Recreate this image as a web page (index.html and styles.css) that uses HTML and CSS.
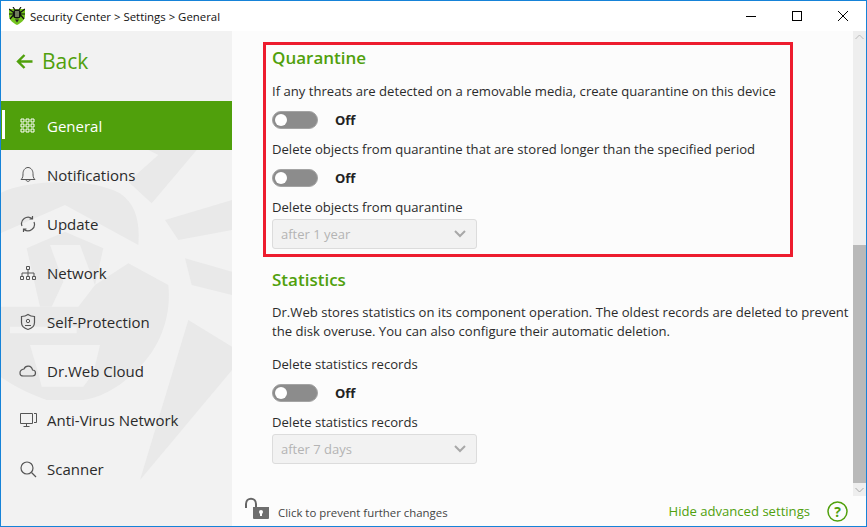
FILE: index.html
```html
<!DOCTYPE html>
<html lang="en">
<head>
    <meta charset="UTF-8">
    <title>Security Center > Settings > General</title>
    <link rel="stylesheet" href="styles.css">
</head>
<body>
<div class="window">
    <div class="titlebar">
        <svg class="logo" width="16" height="18" viewBox="0 0 16 18">
            <path d="M0 2h16v7c0 4-4 7-8 9-4-2-8-5-8-9z" fill="#74c41f"/>
            <path d="M0 2l4 3M16 2l-4 3M0 7h3.500M16 7h-3.500M1 12l3-3.500M15 12l-3-3.500M4 0l2 3M12 0l-2 3" stroke="#111" stroke-width="1.200"/>
            <ellipse cx="8" cy="7" rx="4.500" ry="4.500" fill="#111"/>
            <path d="M6.500 4h3v6h-3z" fill="#cfe9a8"/>
            <path d="M8 4v6" stroke="#111"/>
            <path d="M6 12.500h4l-2 3z" fill="#222"/>
        </svg>
        <span class="title">Security Center &gt; Settings &gt; General</span>
        <div class="controls">
            <svg width="12" height="12" viewBox="0 0 12 12"><path d="M1 6.500h10" stroke="#000"/></svg>
            <svg width="12" height="12" viewBox="0 0 12 12"><rect x="1.500" y="1.500" width="9" height="9" fill="none" stroke="#000"/></svg>
            <svg width="12" height="12" viewBox="0 0 12 12"><path d="M1 1l10 10M11 1L1 11" stroke="#000"/></svg>
        </div>
    </div>
    <div class="body">
        <aside class="sidebar">
            <svg class="watermark" width="232" height="345" viewBox="0 0 696 1035">
                <g fill="#e9e9e9">
                    <path d="M445 0H590L455 160 385 95 475 15Z"/>
                    <path d="M495 210L696 150V240L535 270Z"/>
                    <path d="M555 325L696 365V435L575 405Z"/>
                    <path d="M565 510L696 590V660L420 990Z"/>
                    <path d="M0 130C60 95 260 75 360 130 410 165 420 220 415 285L195 165 0 250Z"/>
                    <path d="M80 295L195 245 310 295 285 405 240 285H150L190 395 155 470H120Z"/>
                    <path d="M385 340L505 405C515 500 480 600 400 670 350 720 290 745 250 750H140C80 730 30 700 0 680V470H235L285 405Z"/>
                </g>
                <g fill="#f2f2f2">
                    <path d="M30 530H230V550H30Z"/>
                    <path d="M90 585H300L280 670 250 710H125L115 670Z"/>
                </g>
            </svg>
            <a class="back">
                <svg width="17" height="17" viewBox="0 0 17 17"><path d="M8.500 2L2 8.500 8.500 15M2.500 8.500H16.500" fill="none" stroke="#50a00c" stroke-width="2.400"/></svg>
                <span>Back</span>
            </a>
            <nav class="nav">
                <a class="nav-item active">
                    <svg width="18" height="18" viewBox="0 0 18 18" fill="none" stroke="#fff"><path d="M2.500 2.500h3v3h-3zM7.500 2.500h3v3h-3zM12.500 2.500h3v3h-3zM2.500 7.500h3v3h-3zM7.500 7.500h3v3h-3zM12.500 7.500h3v3h-3zM2.500 12.500h3v3h-3zM7.500 12.500h3v3h-3zM12.500 12.500h3v3h-3z" transform="translate(-.5 -.5)"/></svg>
                    <span>General</span>
                </a>
                <a class="nav-item">
                    <svg width="18" height="18" viewBox="0 0 18 18" fill="none" stroke="#555"><path d="M2 13.500c2-1.500 2-4 2-6 0-3 2-6 5-6s5 3 5 6c0 2 0 4.500 2 6zM7 13.500c0 2.500 4 2.500 4 0"/></svg>
                    <span>Notifications</span>
                </a>
                <a class="nav-item">
                    <svg width="18" height="18" viewBox="0 0 18 18" fill="none" stroke="#555" stroke-width="1.200"><path d="M3 11A6.500 6.500 0 0 1 13 3.500M15 7a6.500 6.500 0 0 1-10 7.500M13.500 1v3h-3M4.500 17v-3h3"/></svg>
                    <span>Update</span>
                </a>
                <a class="nav-item">
                    <svg width="18" height="18" viewBox="0 0 18 18" fill="none" stroke="#555"><path d="M7.500 2.500h3v3h-3zM1.500 12.500h3v3h-3zM7.500 12.500h3v3h-3zM13.500 12.500h3v3h-3zM9 5.500v7M3 12.500v-3.500h12v3.500"/></svg>
                    <span>Network</span>
                </a>
                <a class="nav-item">
                    <svg width="18" height="18" viewBox="0 0 18 18" fill="none" stroke="#555"><path d="M9 1.500c2 1.500 4 2 6.500 2v6c0 3.500-3 6-6.500 7-3.500-1-6.500-3.500-6.500-7v-6c2.500 0 4.500-.5 6.500-2z" stroke-width="1.200"/><circle cx="9" cy="8" r="1.700"/><path d="M6 12.500h6"/></svg>
                    <span>Self-Protection</span>
                </a>
                <a class="nav-item">
                    <svg width="18" height="18" viewBox="0 0 18 18" fill="none" stroke="#555" stroke-width="1.200"><path d="M4.500 14h9c4 0 4-6 0-6-1-5-7-5-8.500-1C-.5 8 0 14 4.500 14z"/></svg>
                    <span>Dr.Web Cloud</span>
                </a>
                <a class="nav-item">
                    <svg width="18" height="18" viewBox="0 0 18 18" fill="none" stroke="#555"><path d="M1.500 2.500h12v10h-12zM7.500 12.500v3M4.500 15.500h6M15 2.500h2.500v9H15"/></svg>
                    <span>Anti-Virus Network</span>
                </a>
                <a class="nav-item">
                    <svg width="18" height="18" viewBox="0 0 18 18" fill="none" stroke="#555" stroke-width="1.200"><circle cx="8" cy="8" r="6"/><path d="M12.500 12.500L17 17"/></svg>
                    <span>Scanner</span>
                </a>
            </nav>
        </aside>
        <main class="main">
            <div class="content">
                <section class="section highlighted">
                    <h2>Quarantine</h2>
                    <p>If any threats are detected on a removable media, create quarantine on this device</p>
                    <div class="toggle-row"><span class="toggle"></span><b>Off</b></div>
                    <p>Delete objects from quarantine that are stored longer than the specified period</p>
                    <div class="toggle-row"><span class="toggle"></span><b>Off</b></div>
                    <p>Delete objects from quarantine</p>
                    <div class="select"><span>after 1 year</span><svg width="12" height="8" viewBox="0 0 12 8"><path d="M1 1l5 5 5-5" fill="none" stroke="#a8a8a8" stroke-width="2"/></svg></div>
                </section>
                <section class="section stats">
                    <h2>Statistics</h2>
                    <p class="desc">Dr.Web stores statistics on its component operation. The oldest records are deleted to prevent the disk overuse. You can also configure their automatic deletion.</p>
                    <p>Delete statistics records</p>
                    <div class="toggle-row"><span class="toggle"></span><b>Off</b></div>
                    <p>Delete statistics records</p>
                    <div class="select"><span>after 7 days</span><svg width="12" height="8" viewBox="0 0 12 8"><path d="M1 1l5 5 5-5" fill="none" stroke="#a8a8a8" stroke-width="2"/></svg></div>
                </section>
            </div>
            <div class="scrollbar">
                <svg width="13" height="13" viewBox="0 0 13 13"><path d="M2.500 8l4-4 4 4" fill="none" stroke="#bbb"/></svg>
                <div class="scroll-space"></div>
                <div class="scroll-thumb"></div>
                <svg width="13" height="13" viewBox="0 0 13 13"><path d="M2.500 5l4 4 4-4" fill="none" stroke="#aaa"/></svg>
            </div>
            <footer class="footer">
                <svg width="30" height="26" viewBox="0 0 30 26">
                    <path d="M2 12V8c0-7 10-7 10 0v3" fill="none" stroke="#666" stroke-width="2"/>
                    <path d="M9 11h16v11q0 1-1 1H10q-1 0-1-1z" fill="#6e6e6e"/>
                    <circle cx="17" cy="16" r="2" fill="#fff"/><path d="M16 16h2v4h-2z" fill="#fff"/>
                </svg>
                <span class="lock-text">Click to prevent further changes</span>
                <a class="hide-link">Hide advanced settings</a>
                <svg width="21" height="21" viewBox="0 0 21 21"><circle cx="10.500" cy="10.500" r="9.500" fill="none" stroke="#50a00c" stroke-width="1.500"/><text x="10.500" y="15.500" text-anchor="middle" class="help-mark">?</text></svg>
            </footer>
        </main>
    </div>
</div>
</body>
</html>
```

FILE: styles.css
```css
* {
    box-sizing: border-box;
}
html, body {
    margin: 0;
    height: 100%;
}
body {
    font-family: "Open Sans", "Noto Sans", sans-serif;
    color: #222;
    overflow: hidden;
}
.window {
    width: 867px;
    height: 527px;
    border: 1px solid #1683d8;
    display: flex;
    flex-direction: column;
    background: #fcfcfc;
}
.titlebar {
    height: 30px;
    flex: none;
    background: #fff;
    display: flex;
    align-items: center;
    padding-left: 8px;
    font-size: 11.400px;
    color: #111;
}
.logo {
    margin-right: 5px;
}
.controls {
    margin-left: auto;
    display: flex;
    gap: 34px;
    padding-right: 17px;
}
.body {
    flex: 1;
    display: flex;
    min-height: 0;
}
.sidebar {
    width: 231px;
    flex: none;
    background: #f2f2f2;
    position: relative;
    overflow: hidden;
}
.watermark {
    position: absolute;
    left: -1px;
    top: 119px;
}
.back {
    height: 70px;
    display: flex;
    align-items: center;
    gap: 9px;
    padding: 0 0 10px 15px;
    color: #50a00c;
    font-size: 21px;
    position: relative;
}
.nav {
    position: relative;
}
.nav-item {
    height: 49px;
    display: flex;
    align-items: center;
    gap: 10px;
    padding-left: 18px;
    font-size: 15px;
    color: #2b2b2b;
    position: relative;
}
.nav-item.active {
    background: #50a00c;
    color: #fff;
}
.nav-item.active::before {
    content: "";
    position: absolute;
    left: 1px;
    top: 9px;
    width: 3px;
    height: 29px;
    background: #fff;
}
.main {
    flex: 1;
    position: relative;
    min-width: 0;
}
.content {
    padding: 11px 0 0 31px;
    height: 465px;
    overflow: hidden;
    margin-right: 13px;
}
.section h2 {
    margin: 0;
    font-size: 17px;
    font-weight: 600;
    line-height: 26px;
    color: #50a00c;
}
.section p {
    margin: 0;
    font-size: 13.100px;
    line-height: 20px;
    color: #2b2b2b;
}
.highlighted {
    width: 530px;
    height: 215px;
    border: 3px solid #ed1c2e;
    padding: 0 0 0 6px;
    margin-bottom: 10px;
}
.highlighted h2 {
    margin-bottom: 10px;
}
.stats {
    padding-left: 9px;
}
.stats h2 {
    margin-bottom: 10px;
}
.stats .desc {
    margin-bottom: 13px;
    width: 580px;
    line-height: 19px;
}
.toggle-row {
    display: flex;
    align-items: center;
    gap: 17px;
    height: 38px;
    font-size: 13px;
}
.toggle-row b {
    font-weight: 700;
    color: #222;
}
.toggle {
    width: 46px;
    height: 18px;
    border-radius: 9px;
    background: #8c8c8c;
    border: 1px solid #a4a4a4;
    position: relative;
}
.toggle::after {
    content: "";
    position: absolute;
    left: 2px;
    top: 2px;
    width: 12px;
    height: 12px;
    border-radius: 50%;
    background: #fff;
}
.select {
    width: 205px;
    height: 30px;
    margin-top: 2px;
    background: #f2f2f2;
    border: 1px solid #dcdcdc;
    border-radius: 3px;
    display: flex;
    align-items: center;
    justify-content: space-between;
    padding: 0 10px 0 8px;
    font-size: 13px;
    color: #b4b4b4;
}
.scrollbar {
    position: absolute;
    right: 0;
    top: 0;
    width: 13px;
    height: 465px;
    background: #eeeeee;
    display: flex;
    flex-direction: column;
}
.scroll-space {
    height: 201px;
    flex: none;
}
.scroll-thumb {
    flex: 1;
    background: #b9b9b9;
}
.footer {
    height: 30px;
    display: flex;
    align-items: center;
    padding-left: 12px;
    position: relative;
    font-size: 11.400px;
}
.footer > svg:first-child {
    margin-top: -4px;
}
.lock-text {
    margin-left: 4px;
    margin-top: 2px;
    color: #444;
}
.hide-link {
    margin-left: auto;
    font-size: 13.100px;
    color: #50a00c;
    margin-right: 17px;
}
.footer > svg:last-child {
    margin-right: 18px;
}
.help-mark {
    font-size: 14px;
    font-weight: 700;
    fill: #50a00c;
}
```
